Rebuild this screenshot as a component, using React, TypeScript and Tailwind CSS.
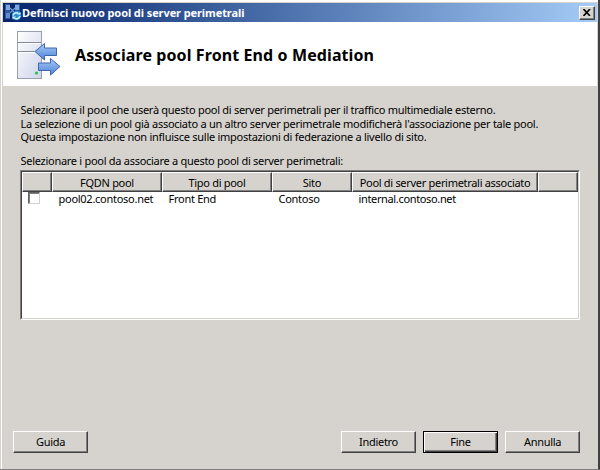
import React from "react";

const raised =
  "border border-t-white border-l-white border-r-[#404040] border-b-[#404040] shadow-[inset_-1px_-1px_0_#808080]";

function TitleIcon() {
  return (
    <svg width="17" height="17" viewBox="0 0 17 17" className="shrink-0">
      <path d="M0 0h5v15H0zM10 0h5v8h-5z" fill="#31579c" />
      <path d="M1 1h4v5H1zM10 1h4v5h-4z" fill="#7fa6dc" />
      <path d="M1 9h4v5H1z" fill="#5f8ccc" />
      <path d="M5 4l5 5M10 4l-5 5" stroke="#6d97d4" strokeWidth="1.3" />
      <circle cx="11.500" cy="11.500" r="4.800" fill="#2a8fc8" />
      <path d="M8 11.500a3.500 3.500 0 0 1 5.500-2M15 12a3.500 3.500 0 0 1-5.500 2" fill="none" stroke="#d2f4ff" strokeWidth="1.500" />
      <path d="M12 10.500h3.500V8zM11 12.500H7.500V15.500z" fill="#d2f4ff" />
    </svg>
  );
}

function ServerIcon() {
  return (
    <svg width="46" height="50" viewBox="0 0 46 50" className="shrink-0">
      <defs>
        <linearGradient id="tower" x1="0" y1="0" x2="1" y2="1">
          <stop offset="0" stopColor="#ffffff" />
          <stop offset="1" stopColor="#cdd3ea" />
        </linearGradient>
        <linearGradient id="arrow" x1="0" y1="0" x2="0" y2="1">
          <stop offset="0" stopColor="#a9cbf8" />
          <stop offset="1" stopColor="#4c82d6" />
        </linearGradient>
      </defs>
      <rect x="1.500" y="2.500" width="24" height="47" fill="url(#tower)" stroke="#9a9fb0" />
      <path d="M2 13.500h23M2 22.500h23" stroke="#858a9b" />
      <path d="M2 14.500h23M2 23.500h23" stroke="#fff" />
      <circle cx="20.500" cy="44" r="1.600" fill="#25c04c" />
      <path d="M19 22.500 28.500 14.500v4.500H40.500v7.500H28.500v4.500z" fill="url(#arrow)" stroke="#3f66ac" strokeLinejoin="round" />
      <path d="M44 37.500 34.500 29.500v4.500H22.500v7.500H34.500v4.500z" fill="url(#arrow)" stroke="#3f66ac" strokeLinejoin="round" />
    </svg>
  );
}

function Button({ label, primary = false }: { label: string; primary?: boolean }) {
  return (
    <button
      className={`flex h-[22px] w-[75px] items-center justify-center bg-[#d6d3ce] pb-px text-[11px] leading-none tracking-[-0.3px] ${
        primary ? "border border-black p-0 shadow-[inset_1px_1px_0_#fff,inset_-1px_-1px_0_#404040,inset_-2px_-2px_0_#808080]" : raised
      }`}
    >
      {label}
    </button>
  );
}

const columns = [
  { label: "", width: "w-[30px]" },
  { label: "FQDN pool", width: "w-[110px]" },
  { label: "Tipo di pool", width: "w-[110px]" },
  { label: "Sito", width: "w-[80px]" },
  { label: "Pool di server perimetrali associato", width: "w-[186px]" },
  { label: "", width: "w-[40px]" },
];

export default function App() {
  return (
    <div className="flex h-[470px] w-[600px] flex-col overflow-hidden border-r-2 border-b border-r-[#404040] border-b-[#808080] bg-[#d6d3ce] pt-[3px] pr-px pl-[3px] font-['Noto_Sans','Open_Sans',sans-serif] text-[11px] tracking-[-0.27px] text-black shadow-[inset_1px_0_0_#d6d3ce,inset_2px_2px_0_#fff]">
      <header className="flex h-[19px] shrink-0 items-center bg-linear-to-r from-[#08246b] to-[#a5cbf7] pr-[2px] pl-[2px]">
        <TitleIcon />
        <span className="grow text-[11px] leading-none font-bold tracking-[-0.09px] whitespace-nowrap text-white">
          Definisci nuovo pool di server perimetrali
        </span>
        <button className={`flex h-[14px] w-[16px] items-center justify-center bg-[#d6d3ce] ${raised}`}>
          <svg width="8" height="7" viewBox="0 0 8 7">
            <path d="M.5 0 7 7M7 0 .5 7" stroke="#000" strokeWidth="1.6" />
          </svg>
        </button>
      </header>
      <div className="flex h-[64px] shrink-0 items-center bg-white pl-[13px]">
        <ServerIcon />
        <h1 className="mt-[2px] ml-[13px] text-[16px] leading-none font-bold tracking-[0.1px] whitespace-nowrap">
          Associare pool Front End o Mediation
        </h1>
      </div>
      <main className="flex grow flex-col pt-[17px] pr-[16px] pl-[17px]">
        <div className="pl-[0.5px] text-[11px] leading-[13.500px] whitespace-nowrap">
          <p className="tracking-[-0.28px]">Selezionare il pool che userà questo pool di server perimetrali per il traffico multimediale esterno.</p>
          <p>La selezione di un pool già associato a un altro server perimetrale modificherà l'associazione per tale pool.</p>
          <p>Questa impostazione non influisce sulle impostazioni di federazione a livello di sito.</p>
        </div>
        <p className="mt-[10px] pl-[0.5px] leading-[13px] tracking-[-0.28px] whitespace-nowrap">
          Selezionare i pool da associare a questo pool di server perimetrali:
        </p>
        <div className="mt-[3px] h-[150px] w-[560px] border border-t-[#808080] border-r-white border-b-white border-l-[#808080] bg-white">
          <div className="h-full border border-t-[#404040] border-r-[#d6d3ce] border-b-[#d6d3ce] border-l-[#404040]">
            <div className="flex h-[20px] tracking-[-0.3px]">
              {columns.map((c, i) => (
                <div key={i} className={`${c.width} ${raised} flex shrink-0 items-center justify-center bg-[#d6d3ce] pt-px leading-none whitespace-nowrap`}>
                  {c.label}
                </div>
              ))}
            </div>
            <div className="flex h-[13px] items-center leading-none whitespace-nowrap">
              <div className="flex w-[30px] shrink-0 pl-[6px]">
                <span className="size-[12px] border border-t-[#606060] border-r-[#d6d3ce] border-b-[#d6d3ce] border-l-[#606060] shadow-[inset_1px_1px_0_#808080]" />
              </div>
              <div className="w-[110px] shrink-0 pl-[6.5px]">pool02.contoso.net</div>
              <div className="w-[110px] shrink-0 pl-[6.5px]">Front End</div>
              <div className="w-[80px] shrink-0 pl-[6.5px]">Contoso</div>
              <div className="w-[186px] shrink-0 pl-[6.5px] tracking-[-0.35px]">internal.contoso.net</div>
            </div>
          </div>
        </div>
      </main>
      <footer className="flex h-[38px] shrink-0 items-start gap-[7px] pr-[17px] pl-[10px]">
        <Button label="Guida" />
        <div className="grow" />
        <Button label="Indietro" />
        <Button label="Fine" primary />
        <Button label="Annulla" />
      </footer>
    </div>
  );
}
